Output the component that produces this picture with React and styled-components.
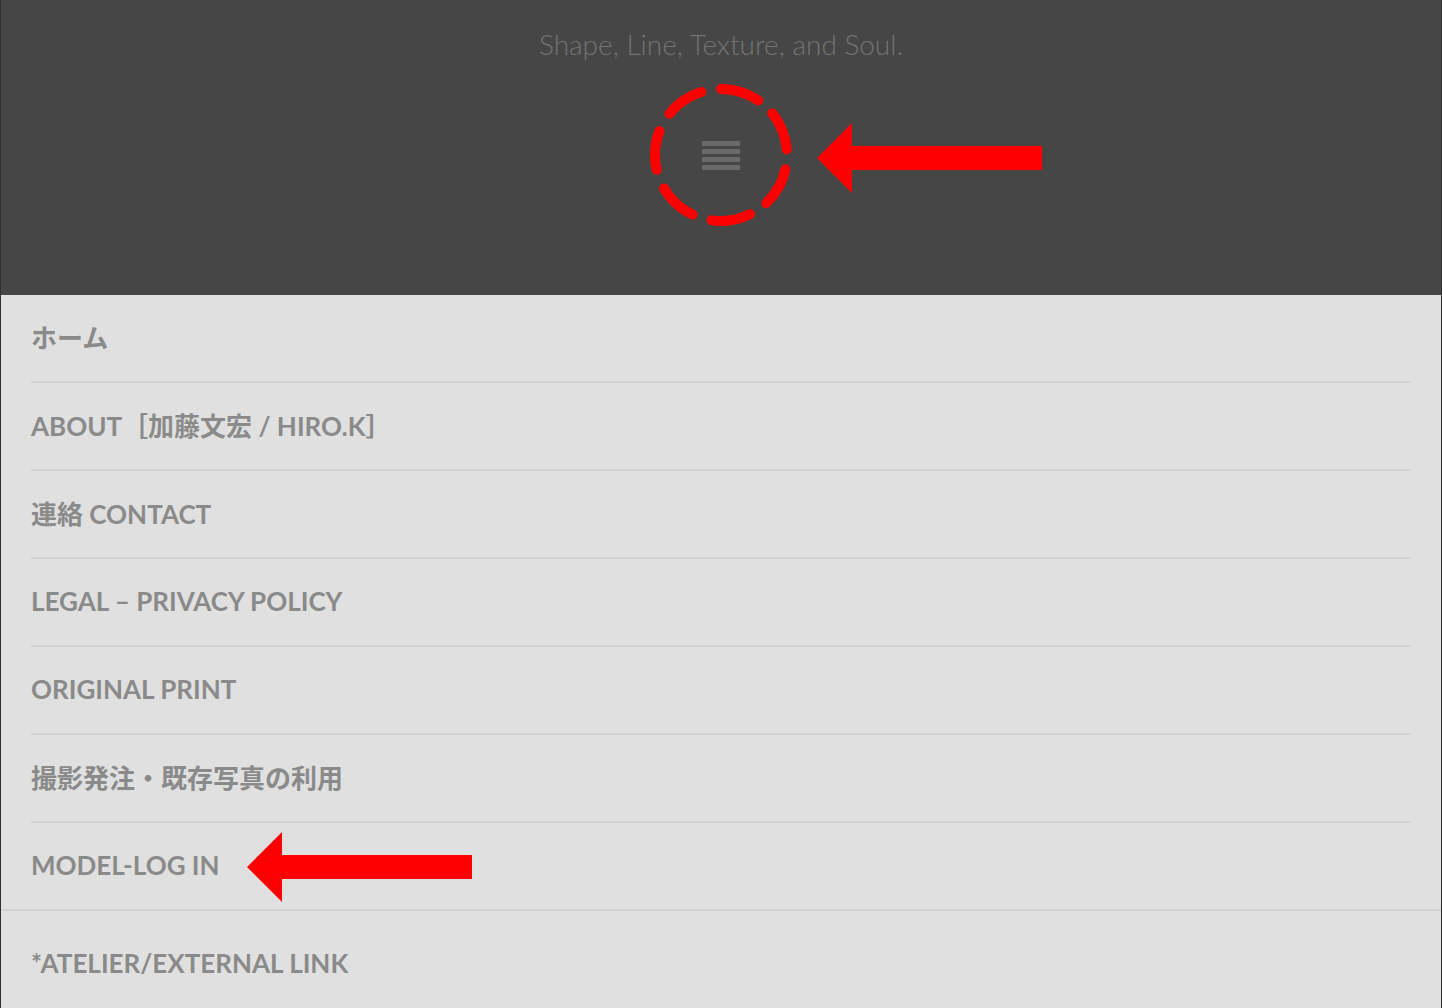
import React from 'react'
import styled, { createGlobalStyle } from 'styled-components'

const GlobalStyle = createGlobalStyle`
  html, body {
    margin: 0;
    padding: 0;
    background: #e0e0e0;
  }
  * { box-sizing: border-box; }
`

const Page = styled.div`
  position: relative;
  width: 1442px;
  height: 1008px;
  overflow: hidden;
  background: #e0e0e0;
  border-left: 1px solid #2f2f2f;
  border-right: 1px solid #2f2f2f;
  font-family: Lato, "Noto Sans CJK JP", sans-serif;
`

const Header = styled.header`
  height: 295px;
  background: #464646;
  display: flex;
  flex-direction: column;
  align-items: center;
  padding-top: 28px;
`

const Tagline = styled.p`
  margin: 0;
  font-family: Lato, sans-serif;
  font-weight: 300;
  font-size: 28px;
  line-height: 32px;
  color: #747474;
`

const ToggleWrap = styled.div`
  position: relative;
  width: 144px;
  height: 144px;
  margin-top: 23px;
  display: flex;
  align-items: center;
  justify-content: center;
`

const Bars = styled.div`
  display: flex;
  flex-direction: column;
  gap: 3px;
  span {
    display: block;
    width: 38px;
    height: 5px;
    border-radius: 1px;
    background: #6a6a6a;
  }
`

const Ring = styled.svg`
  position: absolute;
  left: 0;
  top: 0;
`

const Arrow = styled.svg`
  position: absolute;
  left: ${p => p.x}px;
  top: ${p => p.y}px;
`

const Menu = styled.ul`
  list-style: none;
  margin: 0;
  padding: 0 30px;
`

const Item = styled.li`
  height: ${p => (p.last ? 86 : 88)}px;
  display: flex;
  align-items: center;
  padding-bottom: 3px;
  border-bottom: ${p => (p.last ? 'none' : '2px solid #d2d2d2')};
  font-size: 26px;
  font-weight: 700;
  color: #8a8a8a;
  text-transform: uppercase;
  white-space: nowrap;
`

const Extra = styled.div`
  border-top: 2px solid #d2d2d2;
  padding: 10px 30px 0;
`

const items = [
  'ホーム',
  'ABOUT［加藤文宏 / HIRO.K］',
  '連絡 CONTACT',
  'LEGAL – PRIVACY POLICY',
  'ORIGINAL PRINT',
  '撮影発注・既存写真の利用',
  'MODEL-LOG IN',
]

function RedArrow({ x, y }) {
  return (
    <Arrow x={x} y={y} width="225" height="70" viewBox="0 0 225 70">
      <path d="M0 35 L35 0 L35 23 L225 23 L225 47 L35 47 L35 70 Z" fill="#ff0000" />
    </Arrow>
  )
}

export default function App() {
  return (
    <Page>
      <GlobalStyle />
      <Header>
        <Tagline>Shape, Line, Texture, and Soul.</Tagline>
        <ToggleWrap>
          <Bars>
            <span />
            <span />
            <span />
            <span />
          </Bars>
          <Ring width="144" height="144" viewBox="0 0 144 144">
            <circle
              cx="72"
              cy="72"
              r="66"
              fill="none"
              stroke="#ff0000"
              strokeWidth="10"
              strokeLinecap="round"
              strokeDasharray="39.24 20"
              transform="rotate(-39 72 72)"
            />
          </Ring>
        </ToggleWrap>
      </Header>
      <RedArrow x={816} y={123} />

      <Menu>
        {items.map((t, i) => (
          <Item key={t} last={i === items.length - 1}>{t}</Item>
        ))}
      </Menu>
      <Extra>
        <Item last>*ATELIER/EXTERNAL LINK</Item>
      </Extra>
      <RedArrow x={246} y={832} />
    </Page>
  )
}
